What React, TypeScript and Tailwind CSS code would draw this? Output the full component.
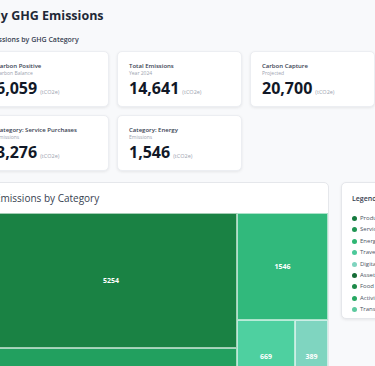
import type React from 'react'

const font = { fontFamily: '"Open Sans", "Noto Sans", sans-serif' }

const cards = [
  { title: 'Carbon Positive', sub: 'Carbon Balance', value: '6,059' },
  { title: 'Total Emissions', sub: 'Year 2024', value: '14,641' },
  { title: 'Carbon Capture', sub: 'Projected', value: '20,700' },
  { title: 'Category: Service Purchases', sub: 'Emissions', value: '3,276' },
  { title: 'Category: Energy', sub: 'Emissions', value: '1,546' },
]

const legend = [
  { label: 'Product Purchases', color: 'bg-[#157a3e]' },
  { label: 'Service Purchases', color: 'bg-[#1f9553]' },
  { label: 'Energy', color: 'bg-[#2eb673]' },
  { label: 'Travel', color: 'bg-[#4cc99a]' },
  { label: 'Digital', color: 'bg-[#7fd4bf]' },
  { label: 'Assets', color: 'bg-[#166c36]' },
  { label: 'Food', color: 'bg-[#1d8a49]' },
  { label: 'Activities', color: 'bg-[#27a862]' },
  { label: 'Transport', color: 'bg-[#5cc99e]' },
]

function Block({
  value,
  className,
  children,
}: {
  value?: string
  className: string
  children?: React.ReactNode
}) {
  return (
    <div
      className={`flex items-center justify-center border border-white/60 ${className}`}
    >
      {value && (
        <span className="text-[7px] font-bold leading-none text-white">
          {value}
        </span>
      )}
      {children}
    </div>
  )
}

export default function App() {
  return (
    <div
      className="h-[366px] w-[375px] overflow-hidden bg-[#f8f9fb]"
      style={font}
    >
      <div className="-ml-[16px] w-[460px] pt-[7px]">
        <h1 className="ml-[5px] text-[12.5px] font-bold leading-[17px] text-[#1f2937]">
          My GHG Emissions
        </h1>
        <h2 className="ml-[2px] mt-[11px] text-[7px] font-semibold leading-[10px] text-[#374151]">
          Emissions by GHG Category
        </h2>

        {/* Cards */}
        <div className="mt-[6px] grid w-[391px] grid-cols-3 gap-x-2 gap-y-2">
          {cards.map((card) => (
            <div
              key={card.title}
              className="h-[56px] rounded-[5px] border border-[#eceef2] bg-white px-[11px] pt-[10px] shadow-[0_1px_3px_rgba(0,0,0,0.08)]"
            >
              <p className="text-[6px] font-semibold leading-[8px] text-[#374151]">
                {card.title}
              </p>
              <p className="text-[5px] leading-[7px] text-[#9ca3af]">
                {card.sub}
              </p>
              <p className="mt-[1px] flex items-baseline gap-[3px]">
                <span className="text-[16px] font-bold leading-[20px] text-[#111827]">
                  {card.value}
                </span>
                <span className="text-[5.5px] text-[#9ca3af]">(tCO2e)</span>
              </p>
            </div>
          ))}
        </div>

        {/* Chart + legend */}
        <div className="mt-[11px] flex items-start gap-[12px]">
          <div className="w-[345px] overflow-hidden rounded-[5px] border border-[#e5e7eb] bg-white">
            <div className="px-[10px] py-[10px] text-[10px] leading-[10px] text-[#374151]">
              Emissions by Category
            </div>
            <div className="flex h-[270px]">
              <div className="flex w-[252px] flex-col">
                <Block value="5254" className="h-[135px] bg-[#1a8244]" />
                <Block value="3276" className="flex-1 bg-[#22a05f]" />
              </div>
              <div className="flex flex-1 flex-col">
                <Block value="1546" className="h-[107px] bg-[#31b97c]" />
                <div className="flex h-[73px]">
                  <Block value="669" className="w-[58px] bg-[#4ed0a0]" />
                  <Block value="389" className="flex-1 bg-[#7fd5c0]" />
                </div>
                <div className="flex flex-1">
                  <Block value="1204" className="flex-1 bg-[#1d8a49]" />
                  <Block className="w-[30px] bg-[#27a862]" />
                </div>
              </div>
            </div>
          </div>

          <div className="h-[137px] w-[100px] rounded-[5px] border border-[#e5e7eb] bg-white px-[10px] pt-[11px] shadow-[0_1px_3px_rgba(0,0,0,0.08)]">
            <p className="text-[7px] font-semibold leading-[10px] text-[#374151]">
              Legend
            </p>
            <ul className="mt-[11px] flex flex-col gap-[4.4px]">
              {legend.map((item) => (
                <li
                  key={item.label}
                  className="flex items-center gap-[3px] text-[6px] leading-[7px] text-[#4b5563]"
                >
                  <span
                    className={`h-[5px] w-[5px] rounded-full ${item.color}`}
                  />
                  {item.label}
                </li>
              ))}
            </ul>
          </div>
        </div>
      </div>
    </div>
  )
}
